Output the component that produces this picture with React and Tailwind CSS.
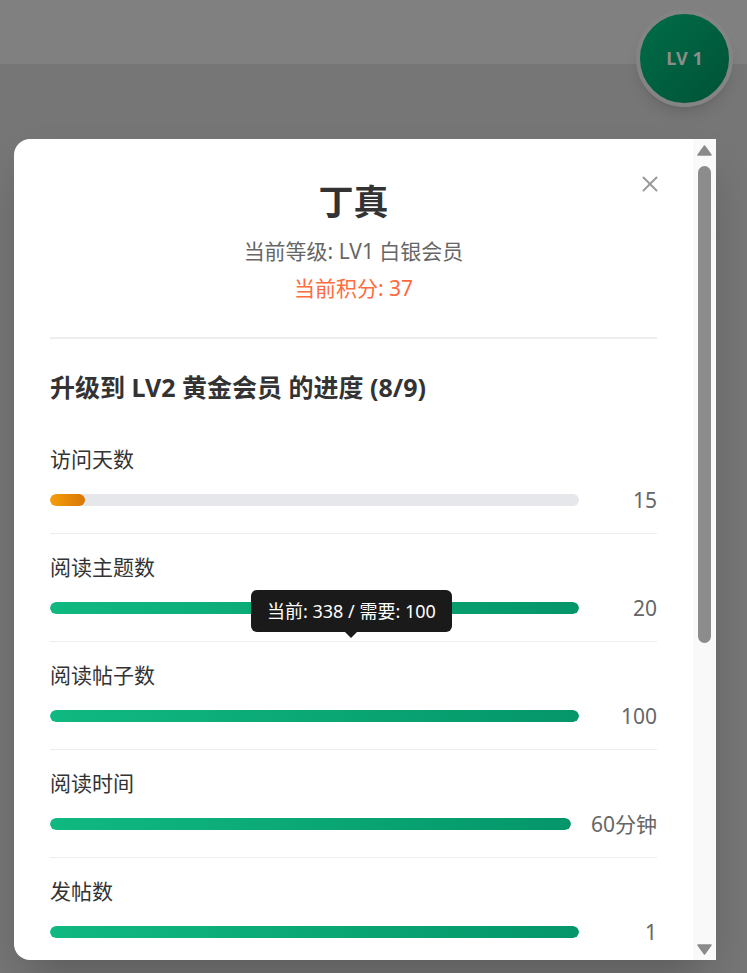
import React from "react";

const rows = [
  { label: "访问天数", value: "15", pct: 6.6, color: "orange" },
  { label: "阅读主题数", value: "20", pct: 100, color: "green", tip: true },
  { label: "阅读帖子数", value: "100", pct: 100, color: "green" },
  { label: "阅读时间", value: "60分钟", pct: 100, color: "green" },
  { label: "发帖数", value: "1", pct: 100, color: "green" },
];

function Row({ r }) {
  return (
    <div className="relative border-b border-[#eeeeee] py-[19px]">
      <div className="text-[21px] leading-[28px] text-[#333333]">{r.label}</div>
      <div className="mt-[13px] flex h-[28px] items-center gap-5">
        <div className="h-[12px] flex-1 overflow-hidden rounded-full bg-[#e5e7eb]">
          <div
            className={
              r.color === "orange"
                ? "h-full rounded-full bg-gradient-to-r from-[#f59e0b] to-[#d97706]"
                : "h-full rounded-full bg-gradient-to-r from-[#10b981] to-[#059669]"
            }
            style={{ width: `${r.pct}%` }}
          />
        </div>
        <div className="min-w-[58px] text-right text-[21px] leading-[28px] text-[#666666]">
          {r.value}
        </div>
      </div>
      {r.tip && (
        <div className="absolute left-[201px] top-[56px] flex flex-col items-center">
          <div className="rounded-md bg-[#1a1a1a] px-4 py-2 text-[18px] leading-[26px] whitespace-nowrap text-white">
            当前: 338 / 需要: 100
          </div>
          <div className="h-0 w-0 border-x-[6px] border-t-[6px] border-x-transparent border-t-[#1a1a1a]" />
        </div>
      )}
    </div>
  );
}

export default function App() {
  return (
    <div
      className="relative h-[973px] w-[747px] overflow-hidden bg-[#767676]"
      style={{ fontFamily: '"Noto Sans", "Noto Sans CJK SC", sans-serif' }}
    >
      <div className="h-16 bg-[#808080]" />

      {/* LV badge */}
      <div className="absolute left-[636px] top-[10px] flex h-[97px] w-[97px] items-center justify-center rounded-full border-[4px] border-[#848484] bg-gradient-to-br from-[#006d47] to-[#005236] shadow-lg">
        <span className="text-[18px] font-bold text-[#8c8c8c]">LV 1</span>
      </div>

      {/* Modal */}
      <div className="absolute left-[14px] top-[139px] flex h-[821px] w-[702px] overflow-hidden rounded-l-2xl bg-white shadow-2xl">
        <div className="relative flex-1 overflow-hidden px-9">
          <button className="absolute right-[35px] top-[37px] h-4 w-4">
            <svg viewBox="0 0 16 16" className="h-4 w-4" fill="none" stroke="#9a9a9a" strokeWidth="2" strokeLinecap="round">
              <line x1="1.5" y1="1.5" x2="14.5" y2="14.5" />
              <line x1="14.5" y1="1.5" x2="1.5" y2="14.5" />
            </svg>
          </button>

          <div className="pt-[41px] text-center">
            <h2 className="text-[35px] font-bold leading-[44px] text-[#333333]">丁真</h2>
            <p className="mt-[13px] text-[21px] leading-[28px] text-[#666666]">当前等级: LV1 白银会员</p>
            <p className="mt-[9px] text-[21px] leading-[28px] text-[#ff6b3d]">当前积分: 37</p>
          </div>

          <div className="mt-[35px] h-[2px] bg-[#eeeeee]" />

          <h3 className="mb-[23px] mt-[32px] text-[25px] font-bold leading-[32px] text-[#333333]">
            升级到 LV2 黄金会员 的进度 (8/9)
          </h3>

          {rows.map((r) => (
            <Row key={r.label} r={r} />
          ))}
        </div>

        {/* Scrollbar */}
        <div className="flex w-[23px] flex-col items-center bg-[#f9f9f9] pb-[5px] pt-[6px]">
          <svg viewBox="0 0 15 11" className="h-[11px] w-[15px]">
            <path d="M7.5 1 L14 10 L1 10 Z" fill="#8a8a8a" stroke="#8a8a8a" strokeLinejoin="round" strokeWidth="1.5" />
          </svg>
          <div className="mt-[10px] h-[477px] w-[13px] rounded-full bg-[#8c8c8c]" />
          <div className="flex-1" />
          <svg viewBox="0 0 15 11" className="h-[11px] w-[15px]">
            <path d="M1 1 L14 1 L7.5 10 Z" fill="#8a8a8a" stroke="#8a8a8a" strokeLinejoin="round" strokeWidth="1.5" />
          </svg>
        </div>
      </div>
    </div>
  );
}
